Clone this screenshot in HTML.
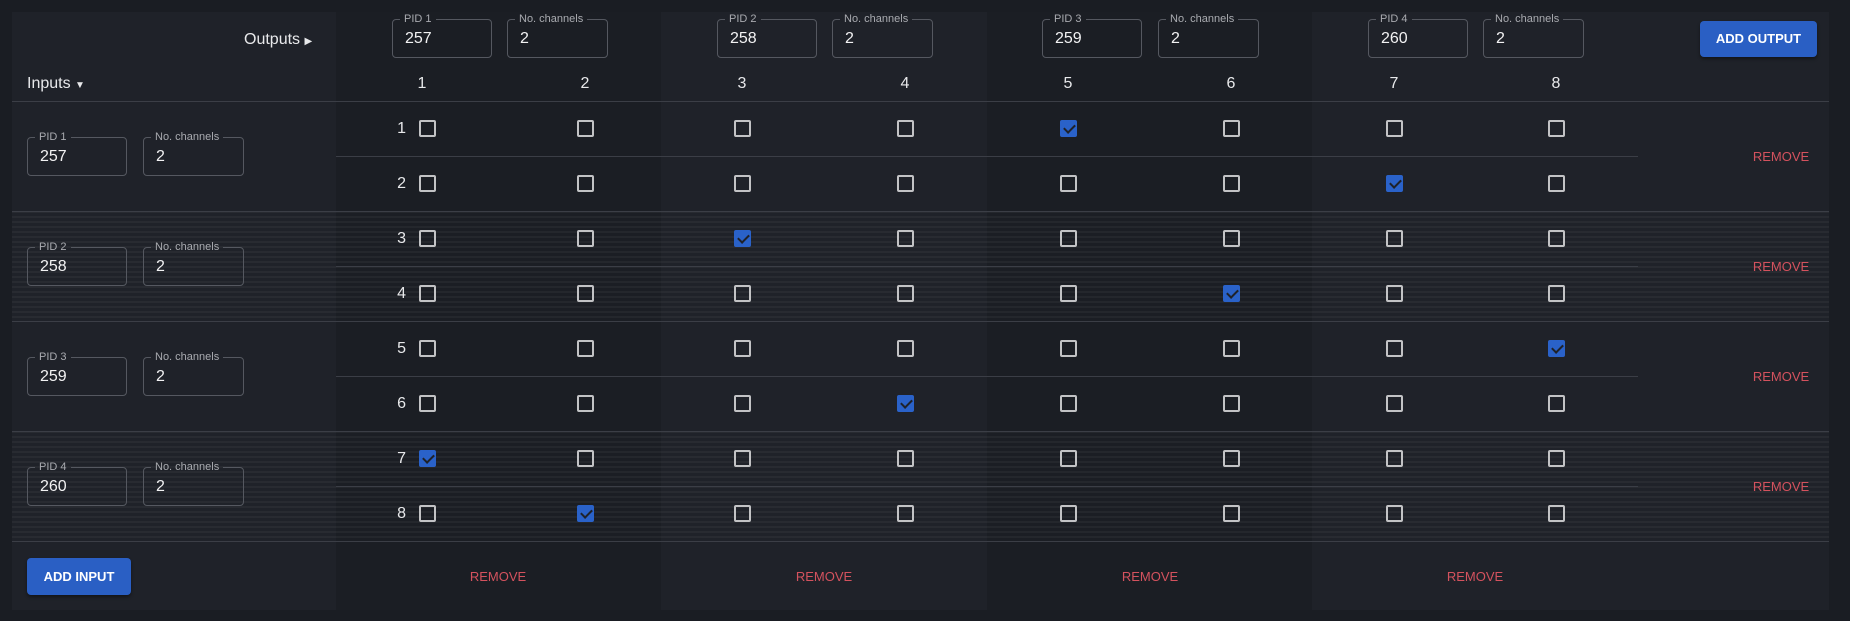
<!DOCTYPE html>
<html><head><meta charset="utf-8"><style>
*{box-sizing:border-box}
body{margin:0;width:1850px;height:621px;background:#1a1d23;font-family:"Liberation Sans",sans-serif;color:#e8e9eb;overflow:hidden;position:relative}
.card{position:absolute;left:12px;top:12px;width:1817px;height:598px;background:#1f2229;overflow:hidden}
.dk{position:absolute;top:0;height:598px;width:325px;background:#1b1e24}
.st{position:absolute;left:0;width:1817px;height:110px;background:repeating-linear-gradient(180deg,rgba(255,255,255,0.04) 0 2px,transparent 2px 5px)}
.hl{position:absolute;height:1px;background:#3b3e46}
.full{left:0;width:1817px}
.part{left:324px;width:1302px}
.cb{position:absolute;width:17px;height:17px;border:2px solid #c2c3c5;border-radius:2px}
.ck{background:#2a62c9;border-color:#2a62c9}
.ck::after{content:"";position:absolute;left:4px;top:0px;width:5px;height:9px;border:solid #1f2229;border-width:0 2px 2px 0;transform:rotate(45deg)}
.r1{top:108px}.r2{top:163px}.r3{top:218px}.r4{top:273px}.r5{top:328px}.r6{top:383px}.r7{top:438px}.r8{top:493px}
.c1{left:407px}.c2{left:565px}.c3{left:722px}.c4{left:885px}.c5{left:1048px}.c6{left:1211px}.c7{left:1374px}.c8{left:1536px}
.rn{position:absolute;left:370px;width:24px;text-align:right;font-size:16px;line-height:20px}
.hn{position:absolute;top:62px;width:40px;text-align:center;font-size:16px;line-height:20px}
fieldset{position:absolute;margin:0;padding:0 0 0 12px;border:1px solid #555860;border-radius:4px;height:46px}
legend{font-size:11px;line-height:14px;padding:0 4px;margin-left:-5px;color:#a9abb0}
fieldset div{font-size:16px;line-height:22px;color:#f2f2f3;margin-top:2px}
.w1{width:100px}.w2{width:101px}
.btn{position:absolute;background:#2a5fc4;color:#fff;font-size:13px;font-weight:bold;border-radius:4px;text-align:center;box-shadow:0 2px 3px rgba(0,0,0,.4)}
.rm{position:absolute;color:#d4525e;font-size:13px;width:100px;text-align:center;margin-left:-50px}
.lb{position:absolute;font-size:16px;line-height:20px}
</style></head><body>
<div class="card">
<div class="dk" style="left:324px"></div>
<div class="dk" style="left:975px"></div>
<div class="st" style="top:199px"></div>
<div class="st" style="top:419px"></div>
<div class="hl full" style="top:89px"></div>
<div class="hl part" style="top:144px"></div>
<div class="hl full" style="top:199px"></div>
<div class="hl part" style="top:254px"></div>
<div class="hl full" style="top:309px"></div>
<div class="hl part" style="top:364px"></div>
<div class="hl full" style="top:419px"></div>
<div class="hl part" style="top:474px"></div>
<div class="hl full" style="top:529px"></div>

<div class="lb" style="left:232px;top:18px">Outputs <span style="font-size:10px">&#9654;</span></div>
<div class="lb" style="left:15px;top:62px">Inputs <span style="font-size:10px">&#9660;</span></div>

<fieldset class="w1" style="left:380px;top:0px"><legend>PID 1</legend><div>257</div></fieldset>
<fieldset class="w2" style="left:495px;top:0px"><legend>No. channels</legend><div>2</div></fieldset>
<fieldset class="w1" style="left:705px;top:0px"><legend>PID 2</legend><div>258</div></fieldset>
<fieldset class="w2" style="left:820px;top:0px"><legend>No. channels</legend><div>2</div></fieldset>
<fieldset class="w1" style="left:1030px;top:0px"><legend>PID 3</legend><div>259</div></fieldset>
<fieldset class="w2" style="left:1146px;top:0px"><legend>No. channels</legend><div>2</div></fieldset>
<fieldset class="w1" style="left:1356px;top:0px"><legend>PID 4</legend><div>260</div></fieldset>
<fieldset class="w2" style="left:1471px;top:0px"><legend>No. channels</legend><div>2</div></fieldset>
<div class="btn" style="left:1688px;top:9px;width:117px;height:36px;line-height:36px">ADD OUTPUT</div>

<div class="hn" style="left:390px">1</div><div class="hn" style="left:553px">2</div>
<div class="hn" style="left:710px">3</div><div class="hn" style="left:873px">4</div>
<div class="hn" style="left:1036px">5</div><div class="hn" style="left:1199px">6</div>
<div class="hn" style="left:1362px">7</div><div class="hn" style="left:1524px">8</div>

<fieldset class="w1" style="left:15px;top:118px"><legend>PID 1</legend><div>257</div></fieldset>
<fieldset class="w2" style="left:131px;top:118px"><legend>No. channels</legend><div>2</div></fieldset>
<fieldset class="w1" style="left:15px;top:228px"><legend>PID 2</legend><div>258</div></fieldset>
<fieldset class="w2" style="left:131px;top:228px"><legend>No. channels</legend><div>2</div></fieldset>
<fieldset class="w1" style="left:15px;top:338px"><legend>PID 3</legend><div>259</div></fieldset>
<fieldset class="w2" style="left:131px;top:338px"><legend>No. channels</legend><div>2</div></fieldset>
<fieldset class="w1" style="left:15px;top:448px"><legend>PID 4</legend><div>260</div></fieldset>
<fieldset class="w2" style="left:131px;top:448px"><legend>No. channels</legend><div>2</div></fieldset>

<div class="rn" style="top:107px">1</div><div class="rn" style="top:162px">2</div>
<div class="rn" style="top:217px">3</div><div class="rn" style="top:272px">4</div>
<div class="rn" style="top:327px">5</div><div class="rn" style="top:382px">6</div>
<div class="rn" style="top:437px">7</div><div class="rn" style="top:492px">8</div>

<i class="cb r1 c1"></i><i class="cb r1 c2"></i><i class="cb r1 c3"></i><i class="cb r1 c4"></i><i class="cb ck r1 c5"></i><i class="cb r1 c6"></i><i class="cb r1 c7"></i><i class="cb r1 c8"></i>
<i class="cb r2 c1"></i><i class="cb r2 c2"></i><i class="cb r2 c3"></i><i class="cb r2 c4"></i><i class="cb r2 c5"></i><i class="cb r2 c6"></i><i class="cb ck r2 c7"></i><i class="cb r2 c8"></i>
<i class="cb r3 c1"></i><i class="cb r3 c2"></i><i class="cb ck r3 c3"></i><i class="cb r3 c4"></i><i class="cb r3 c5"></i><i class="cb r3 c6"></i><i class="cb r3 c7"></i><i class="cb r3 c8"></i>
<i class="cb r4 c1"></i><i class="cb r4 c2"></i><i class="cb r4 c3"></i><i class="cb r4 c4"></i><i class="cb r4 c5"></i><i class="cb ck r4 c6"></i><i class="cb r4 c7"></i><i class="cb r4 c8"></i>
<i class="cb r5 c1"></i><i class="cb r5 c2"></i><i class="cb r5 c3"></i><i class="cb r5 c4"></i><i class="cb r5 c5"></i><i class="cb r5 c6"></i><i class="cb r5 c7"></i><i class="cb ck r5 c8"></i>
<i class="cb r6 c1"></i><i class="cb r6 c2"></i><i class="cb r6 c3"></i><i class="cb ck r6 c4"></i><i class="cb r6 c5"></i><i class="cb r6 c6"></i><i class="cb r6 c7"></i><i class="cb r6 c8"></i>
<i class="cb ck r7 c1"></i><i class="cb r7 c2"></i><i class="cb r7 c3"></i><i class="cb r7 c4"></i><i class="cb r7 c5"></i><i class="cb r7 c6"></i><i class="cb r7 c7"></i><i class="cb r7 c8"></i>
<i class="cb r8 c1"></i><i class="cb ck r8 c2"></i><i class="cb r8 c3"></i><i class="cb r8 c4"></i><i class="cb r8 c5"></i><i class="cb r8 c6"></i><i class="cb r8 c7"></i><i class="cb r8 c8"></i>

<div class="rm" style="left:1769px;top:137px">REMOVE</div>
<div class="rm" style="left:1769px;top:247px">REMOVE</div>
<div class="rm" style="left:1769px;top:357px">REMOVE</div>
<div class="rm" style="left:1769px;top:467px">REMOVE</div>

<div class="btn" style="left:15px;top:546px;width:104px;height:37px;line-height:37px">ADD INPUT</div>
<div class="rm" style="left:486px;top:557px">REMOVE</div>
<div class="rm" style="left:812px;top:557px">REMOVE</div>
<div class="rm" style="left:1138px;top:557px">REMOVE</div>
<div class="rm" style="left:1463px;top:557px">REMOVE</div>
</div>
</body></html>
